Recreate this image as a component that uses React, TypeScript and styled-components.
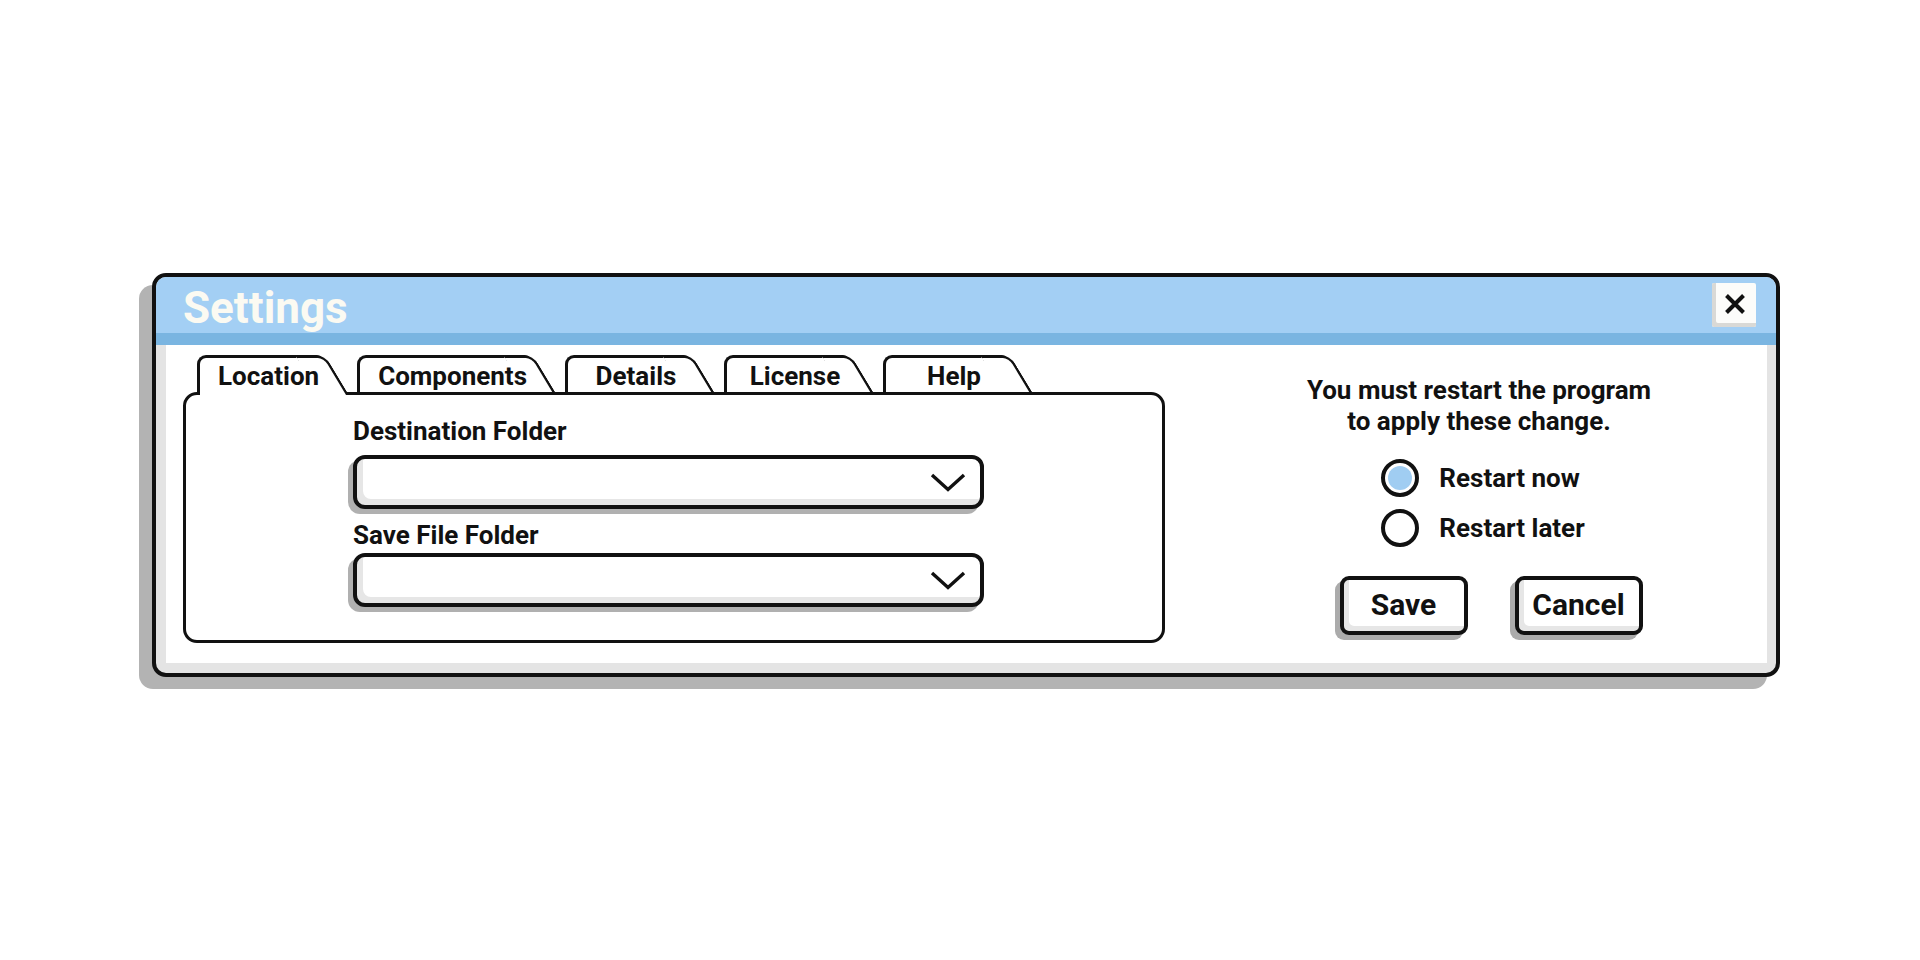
import React from "react";
import styled, { createGlobalStyle } from "styled-components";

const GlobalStyle = createGlobalStyle`
  html, body {
    margin: 0;
    padding: 0;
    background: #ffffff;
  }
  body {
    font-family: Roboto, "Liberation Sans", Arial, sans-serif;
    color: #111111;
  }
  *, *::before, *::after {
    box-sizing: border-box;
  }
`;

const Page = styled.div`
  width: 1920px;
  height: 960px;
  padding: 273px 0 0 152px;
`;

const Dialog = styled.section`
  width: 1628px;
  height: 404px;
  border: 4px solid #111111;
  border-radius: 14px;
  background: #e4e4e4;
  box-shadow: -13px 12px 0 #b3b3b3;
  overflow: hidden;
  display: flex;
  flex-direction: column;
`;

const TitleBar = styled.header`
  flex: none;
  height: 68px;
  background: #a3cff4;
  border-bottom: 12px solid #7ab5e1;
  display: flex;
  align-items: center;
  justify-content: space-between;
  padding: 0 20px 0 27px;
`;

const Title = styled.h1`
  margin: 0;
  padding-top: 6px;
  font-size: 44px;
  line-height: 44px;
  font-weight: 700;
  color: #fbfaf2;
`;

const CloseButton = styled.button`
  width: 44px;
  height: 44px;
  padding: 0 0 2px 2px;
  border: none;
  border-radius: 2px;
  background: #fcfcfa;
  box-shadow: inset 4px -4px 0 #d9d9d6;
  display: flex;
  align-items: center;
  justify-content: center;
  cursor: pointer;
`;

const Body = styled.div`
  flex: 1;
  margin: 0 9px 10px 10px;
  background: #ffffff;
  display: flex;
  padding: 10px 0 20px 17px;
`;

const LeftSection = styled.div`
  width: 982px;
  display: flex;
  flex-direction: column;
`;

const TabStrip = styled.div`
  position: relative;
  z-index: 1;
  height: 40px;
  margin-bottom: -3px;
  padding-left: 14px;
  display: flex;
  align-items: flex-start;
  gap: 32px;
`;

const Tab = styled.div<{ $active?: boolean }>`
  position: relative;
  height: ${(p) => (p.$active ? 40 : 37)}px;
  min-width: 127px;
  padding: 1px 6px ${(p) => (p.$active ? 3 : 0)}px 18px;
  display: flex;
  align-items: center;
  justify-content: center;
  border-top: 3px solid #111111;
  border-left: 3px solid #111111;
  border-radius: 9px 9px 0 0;
  background: #ffffff;
  font-size: 26px;
  font-weight: 700;
  white-space: nowrap;

  /* slanted right shoulder of the tab */
  &::after {
    content: "";
    position: absolute;
    top: -3px;
    bottom: 0;
    left: calc(100% - 30px);
    width: 30px;
    border-top: 3px solid #111111;
    border-right: 3px solid #111111;
    border-top-right-radius: 9px;
    background: #ffffff;
    transform-origin: top left;
    transform: skewX(31deg);
  }
`;

const TabLabel = styled.span`
  position: relative;
  z-index: 1;
`;

const Panel = styled.div`
  flex: 1;
  border: 3px solid #111111;
  border-radius: 14px;
  background: #ffffff;
  padding: 21px 0 0 167px;
  display: flex;
  flex-direction: column;
  align-items: flex-start;
`;

const FieldLabel = styled.div<{ $gap: number }>`
  font-size: 26px;
  line-height: 30px;
  font-weight: 700;
  margin-bottom: ${(p) => p.$gap}px;
`;

const Select = styled.div<{ $after?: number }>`
  width: 631px;
  height: 54px;
  border: 4px solid #111111;
  border-radius: 12px;
  background: #ffffff;
  box-shadow: -5px 5px 0 #b0b0b0, inset 6px -6px 0 #e6e6e6;
  display: flex;
  align-items: center;
  justify-content: flex-end;
  padding-right: 14px;
  margin-bottom: ${(p) => p.$after ?? 0}px;
`;

const Side = styled.div`
  flex: 1;
  margin-left: 26px;
  padding-top: 20px;
  display: flex;
  flex-direction: column;
  align-items: center;
`;

const Notice = styled.p`
  margin: 0;
  font-size: 26px;
  line-height: 31px;
  font-weight: 700;
  text-align: center;
`;

const RadioGroup = styled.div`
  margin-top: 22px;
  padding-left: 8px;
  display: flex;
  flex-direction: column;
  gap: 12px;
`;

const RadioRow = styled.label`
  display: flex;
  align-items: center;
  gap: 20px;
  font-size: 26px;
  font-weight: 700;
  cursor: pointer;
`;

const RadioCircle = styled.span<{ $checked?: boolean }>`
  width: 38px;
  height: 38px;
  border: 4px solid #111111;
  border-radius: 50%;
  background: #ffffff;
  display: flex;
  align-items: center;
  justify-content: center;

  &::after {
    content: "";
    width: 24px;
    height: 24px;
    border-radius: 50%;
    background: ${(p) => (p.$checked ? "#a0cdf2" : "transparent")};
  }
`;

const ButtonRow = styled.div`
  margin-top: 29px;
  padding-left: 24px;
  display: flex;
  gap: 47px;
`;

const ActionButton = styled.button`
  width: 128px;
  height: 59px;
  border: 4px solid #111111;
  border-radius: 9px;
  background: #ffffff;
  box-shadow: -5px 5px 0 #ababab, inset 5px -5px 0 #e6e6e6;
  font-family: inherit;
  font-size: 30px;
  font-weight: 700;
  color: #111111;
  cursor: pointer;
  padding: 0 0 2px 0;
`;

const CloseIcon = () => (
  <svg width="22" height="22" viewBox="0 0 22 22" aria-hidden="true">
    <path
      d="M2.5 2.5 L19.5 19.5 M19.5 2.5 L2.5 19.5"
      stroke="#111111"
      strokeWidth="4"
      strokeLinecap="butt"
      fill="none"
    />
  </svg>
);

const Chevron = () => (
  <svg width="36" height="19" viewBox="0 0 36 19" aria-hidden="true">
    <path
      d="M2 2 L18 16.5 L34 2"
      stroke="#111111"
      strokeWidth="3.4"
      strokeLinejoin="miter"
      fill="none"
    />
  </svg>
);

const tabs = ["Location", "Components", "Details", "License", "Help"];

export default function App() {
  return (
    <>
      <GlobalStyle />
      <Page>
        <Dialog>
          <TitleBar>
            <Title>Settings</Title>
            <CloseButton aria-label="Close">
              <CloseIcon />
            </CloseButton>
          </TitleBar>
          <Body>
            <LeftSection>
              <TabStrip>
                {tabs.map((t, i) => (
                  <Tab key={t} $active={i === 0}>
                    <TabLabel>{t}</TabLabel>
                  </Tab>
                ))}
              </TabStrip>
              <Panel>
                <FieldLabel $gap={9}>Destination Folder</FieldLabel>
                <Select $after={11}>
                  <Chevron />
                </Select>
                <FieldLabel $gap={3}>Save File Folder</FieldLabel>
                <Select>
                  <Chevron />
                </Select>
              </Panel>
            </LeftSection>
            <Side>
              <Notice>
                You must restart the program
                <br />
                to apply these change.
              </Notice>
              <RadioGroup>
                <RadioRow>
                  <RadioCircle $checked />
                  Restart now
                </RadioRow>
                <RadioRow>
                  <RadioCircle />
                  Restart later
                </RadioRow>
              </RadioGroup>
              <ButtonRow>
                <ActionButton>Save</ActionButton>
                <ActionButton>Cancel</ActionButton>
              </ButtonRow>
            </Side>
          </Body>
        </Dialog>
      </Page>
    </>
  );
}
